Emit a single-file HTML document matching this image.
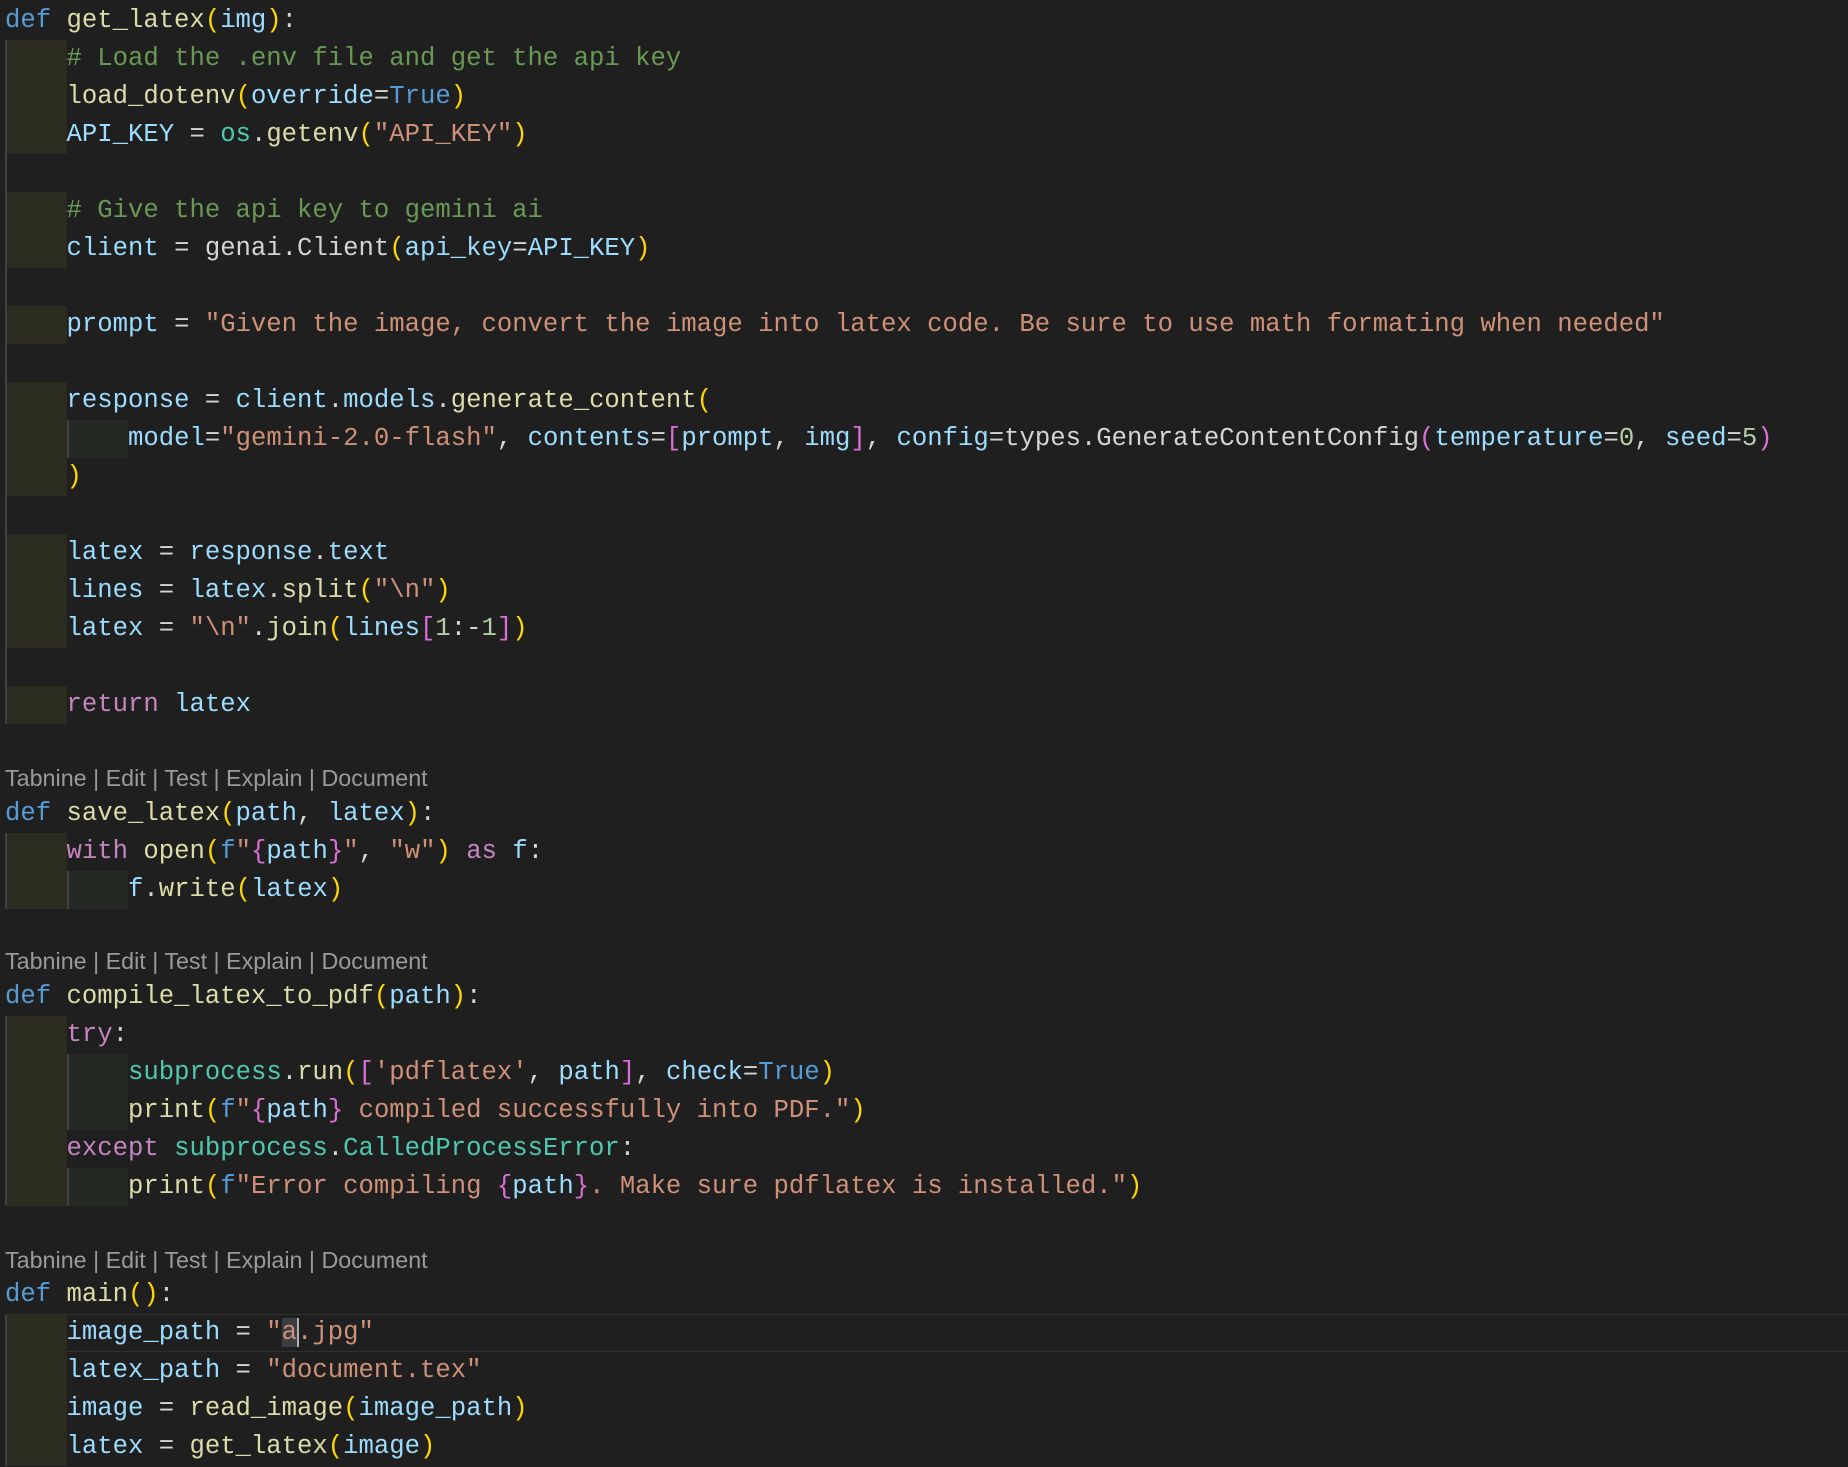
<!DOCTYPE html>
<html><head><meta charset="utf-8"><style>
html,body{margin:0;padding:0;background:#1f1f1f;width:1848px;height:1467px;overflow:hidden}
.l{position:absolute;left:5px;height:38px;line-height:38px;font-family:"Liberation Mono",monospace;font-size:25.62px;color:#d4d4d4;white-space:pre;margin-top:2px}
.i1{display:inline-block;width:61.5px;height:38px;vertical-align:top;background:#2c2b20;box-shadow:inset 2px 0 #404040}
.i2{display:inline-block;width:61.5px;height:38px;vertical-align:top;background:#252924;box-shadow:inset 2px 0 #404040}
.g{position:absolute;left:5px;width:2px;height:38px;background:#404040;margin-top:2px}
.t{position:absolute;left:5px;height:33px;line-height:33px;font-family:"Liberation Sans",sans-serif;font-size:23.3px;color:#9a9a9a;white-space:pre}
.k{color:#569cd6}.f{color:#dcdcaa}.v{color:#9cdcfe}.c{color:#6a9955}.s{color:#ce9178}
.y{color:#ffd700}.p{color:#da70d6}.b{color:#179fff}.m{color:#c586c0}.o{color:#4ec9b0}.n{color:#b5cea8}
.cur{position:absolute;left:5px;width:1843px;height:36px;top:1314px;border-top:1px solid #303030;border-bottom:1px solid #303030}
</style></head><body>
<div class="cur"></div>
<div class="l" style="top:0"><span class="k">def</span> <span class="f">get_latex</span><span class="y">(</span><span class="v">img</span><span class="y">)</span>:</div>
<div class="l" style="top:38px"><span class="i1"></span><span class="c"># Load the .env file and get the api key</span></div>
<div class="l" style="top:76px"><span class="i1"></span><span class="f">load_dotenv</span><span class="y">(</span><span class="v">override</span>=<span class="k">True</span><span class="y">)</span></div>
<div class="l" style="top:114px"><span class="i1"></span><span class="v">API_KEY</span> = <span class="o">os</span>.<span class="f">getenv</span><span class="y">(</span><span class="s">"API_KEY"</span><span class="y">)</span></div>
<div class="g" style="top:152px"></div>
<div class="l" style="top:190px"><span class="i1"></span><span class="c"># Give the api key to gemini ai</span></div>
<div class="l" style="top:228px"><span class="i1"></span><span class="v">client</span> = genai.Client<span class="y">(</span><span class="v">api_key</span>=<span class="v">API_KEY</span><span class="y">)</span></div>
<div class="g" style="top:266px"></div>
<div class="l" style="top:304px"><span class="i1"></span><span class="v">prompt</span> = <span class="s">"Given the image, convert the image into latex code. Be sure to use math formating when needed"</span></div>
<div class="g" style="top:342px"></div>
<div class="l" style="top:380px"><span class="i1"></span><span class="v">response</span> = <span class="v">client</span>.<span class="v">models</span>.<span class="f">generate_content</span><span class="y">(</span></div>
<div class="l" style="top:418px"><span class="i1"></span><span class="i2"></span><span class="v">model</span>=<span class="s">"gemini-2.0-flash"</span>, <span class="v">contents</span>=<span class="p">[</span><span class="v">prompt</span>, <span class="v">img</span><span class="p">]</span>, <span class="v">config</span>=types.GenerateContentConfig<span class="p">(</span><span class="v">temperature</span>=<span class="n">0</span>, <span class="v">seed</span>=<span class="n">5</span><span class="p">)</span></div>
<div class="l" style="top:456px"><span class="i1"></span><span class="y">)</span></div>
<div class="g" style="top:494px"></div>
<div class="l" style="top:532px"><span class="i1"></span><span class="v">latex</span> = <span class="v">response</span>.<span class="v">text</span></div>
<div class="l" style="top:570px"><span class="i1"></span><span class="v">lines</span> = <span class="v">latex</span>.<span class="f">split</span><span class="y">(</span><span class="s">"\n"</span><span class="y">)</span></div>
<div class="l" style="top:608px"><span class="i1"></span><span class="v">latex</span> = <span class="s">"\n"</span>.<span class="f">join</span><span class="y">(</span><span class="v">lines</span><span class="p">[</span><span class="n">1</span>:-<span class="n">1</span><span class="p">]</span><span class="y">)</span></div>
<div class="g" style="top:646px"></div>
<div class="l" style="top:684px"><span class="i1"></span><span class="m">return</span> <span class="v">latex</span></div>
<div class="t" style="top:762px">Tabnine | Edit | Test | Explain | Document</div>
<div class="l" style="top:793px"><span class="k">def</span> <span class="f">save_latex</span><span class="y">(</span><span class="v">path</span>, <span class="v">latex</span><span class="y">)</span>:</div>
<div class="l" style="top:831px"><span class="i1"></span><span class="m">with</span> <span class="f">open</span><span class="y">(</span><span class="k">f</span><span class="s">"</span><span class="p">{</span><span class="v">path</span><span class="p">}</span><span class="s">"</span>, <span class="s">"w"</span><span class="y">)</span> <span class="m">as</span> <span class="v">f</span>:</div>
<div class="l" style="top:869px"><span class="i1"></span><span class="i2"></span><span class="v">f</span>.<span class="f">write</span><span class="y">(</span><span class="v">latex</span><span class="y">)</span></div>
<div class="t" style="top:945px">Tabnine | Edit | Test | Explain | Document</div>
<div class="l" style="top:976px"><span class="k">def</span> <span class="f">compile_latex_to_pdf</span><span class="y">(</span><span class="v">path</span><span class="y">)</span>:</div>
<div class="l" style="top:1014px"><span class="i1"></span><span class="m">try</span>:</div>
<div class="l" style="top:1052px"><span class="i1"></span><span class="i2"></span><span class="o">subprocess</span>.<span class="f">run</span><span class="y">(</span><span class="p">[</span><span class="s">'pdflatex'</span>, <span class="v">path</span><span class="p">]</span>, <span class="v">check</span>=<span class="k">True</span><span class="y">)</span></div>
<div class="l" style="top:1090px"><span class="i1"></span><span class="i2"></span><span class="f">print</span><span class="y">(</span><span class="k">f</span><span class="s">"</span><span class="p">{</span><span class="v">path</span><span class="p">}</span><span class="s"> compiled successfully into PDF."</span><span class="y">)</span></div>
<div class="l" style="top:1128px"><span class="i1"></span><span class="m">except</span> <span class="o">subprocess</span>.<span class="o">CalledProcessError</span>:</div>
<div class="l" style="top:1166px"><span class="i1"></span><span class="i2"></span><span class="f">print</span><span class="y">(</span><span class="k">f</span><span class="s">"Error compiling </span><span class="p">{</span><span class="v">path</span><span class="p">}</span><span class="s">. Make sure pdflatex is installed."</span><span class="y">)</span></div>
<div class="t" style="top:1244px">Tabnine | Edit | Test | Explain | Document</div>
<div class="l" style="top:1274px"><span class="k">def</span> <span class="f">main</span><span class="y">()</span>:</div>
<div class="l" style="top:1312px"><span class="i1"></span><span class="v">image_path</span> = <span class="s">"<span style="background:#3a3d41;box-shadow:2px 0 #aeafad">a</span>.jpg"</span></div>
<div class="l" style="top:1350px"><span class="i1"></span><span class="v">latex_path</span> = <span class="s">"document.tex"</span></div>
<div class="l" style="top:1388px"><span class="i1"></span><span class="v">image</span> = <span class="f">read_image</span><span class="y">(</span><span class="v">image_path</span><span class="y">)</span></div>
<div class="l" style="top:1426px"><span class="i1"></span><span class="v">latex</span> = <span class="f">get_latex</span><span class="y">(</span><span class="v">image</span><span class="y">)</span></div>
</body></html>
